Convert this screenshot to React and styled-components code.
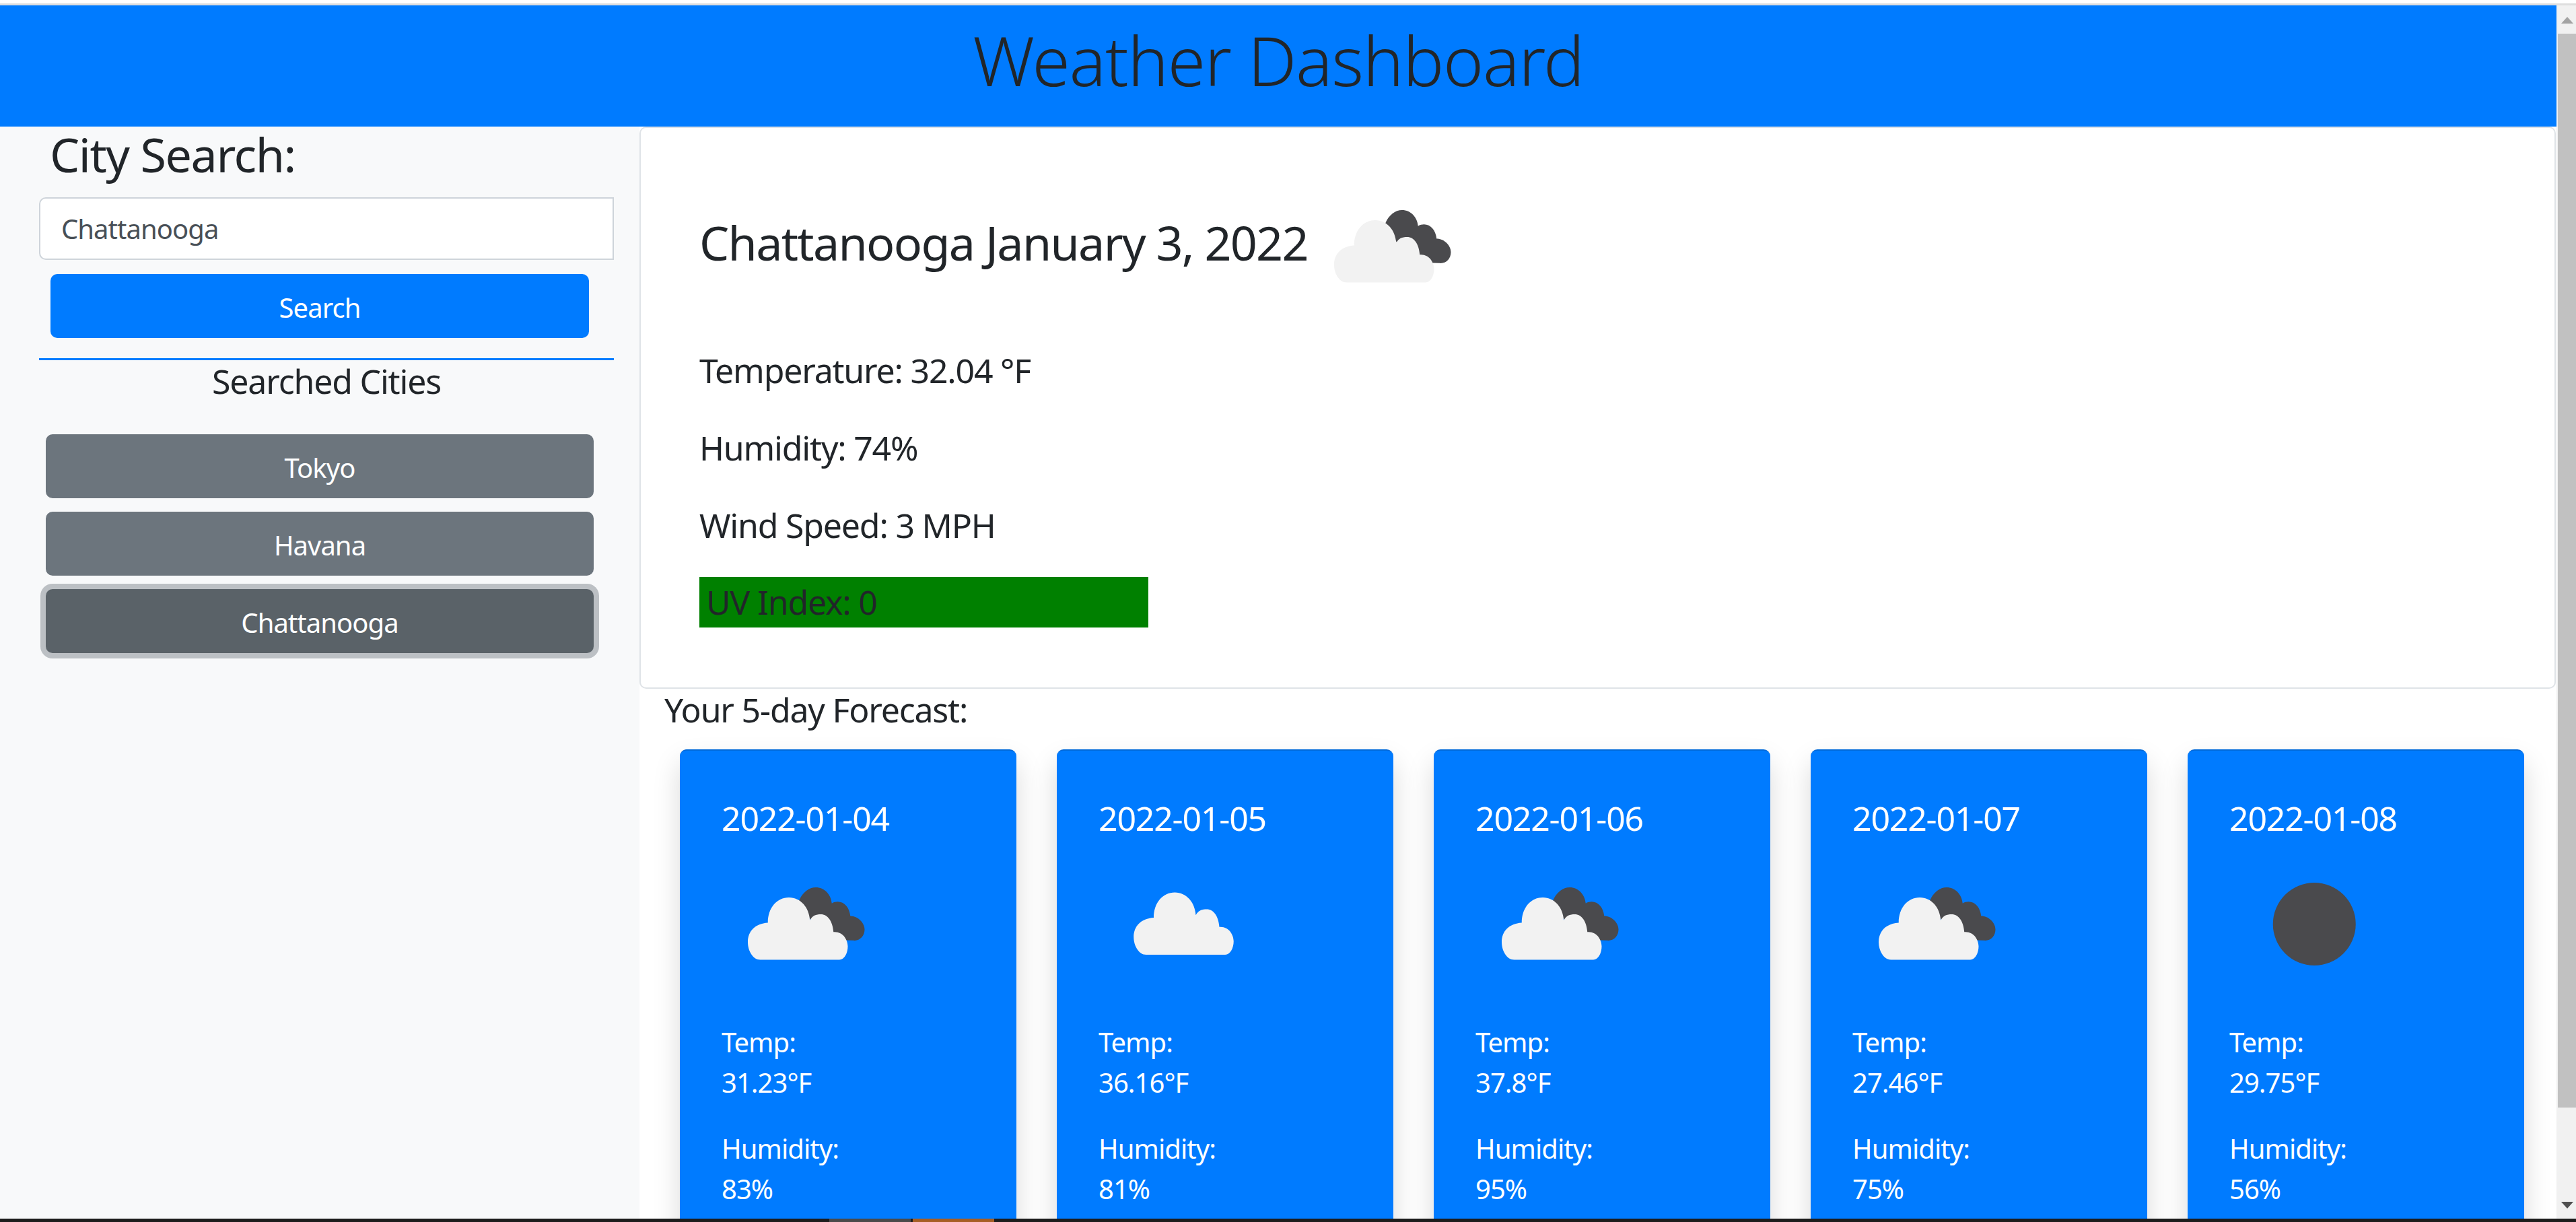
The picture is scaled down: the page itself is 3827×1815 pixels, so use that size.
import React from "react";
import styled, { createGlobalStyle } from "styled-components";

const GlobalStyle = createGlobalStyle`
  html, body, #root {
    margin: 0;
    height: 100%;
    overflow: hidden;
  }
  body {
    background: #fff;
    color: #212529;
    font-family: "Noto Sans", "Open Sans", sans-serif;
    font-weight: 400;
  }
  * {
    box-sizing: border-box;
    letter-spacing: -0.024em;
  }
`;

const Screen = styled.div`
  display: flex;
  flex-direction: column;
  height: 1815px;
  overflow: hidden;
`;

const WindowEdge = styled.div`
  flex: none;
  height: 8px;
  background: #fff;
  border-bottom: 3px solid #dedede;
`;

const Viewport = styled.div`
  flex: 1;
  min-height: 0;
  display: flex;
`;

const Page = styled.div`
  flex: 1;
  min-width: 0;
  overflow: hidden;
`;

const Scrollbar = styled.div`
  flex: none;
  width: 29px;
  background: #f1f1f1;
  display: flex;
  flex-direction: column;
  align-items: flex-end;
`;

const ScrollArrow = styled.div`
  flex: none;
  width: 27px;
  height: 42px;
  display: flex;
  align-items: ${(p) => (p.$down ? "flex-end" : "flex-start")};
  justify-content: center;
  padding: ${(p) => (p.$down ? "0 0 15px" : "17px 0 0")};
  &::after {
    content: "";
    border-left: 9px solid transparent;
    border-right: 9px solid transparent;
    border-bottom: ${(p) => (p.$down ? "0" : "10px solid #a3a3a3")};
    border-top: ${(p) => (p.$down ? "10px solid #505050" : "0")};
  }
`;

const ScrollThumb = styled.div`
  flex: none;
  width: 27px;
  height: 1595px;
  background: #c1c1c1;
`;

const ScrollGap = styled.div`
  flex: 1;
`;

const Taskbar = styled.div`
  flex: none;
  height: 5px;
  background: #1c1c1c;
  display: flex;
  padding-left: 1232px;
  gap: 3px;
`;

const TaskItem = styled.div`
  width: 121px;
  background: ${(p) => p.$color};
`;

const Header = styled.header`
  height: 180px;
  padding-bottom: 18px;
  background: #007bff;
  display: flex;
  align-items: center;
  justify-content: center;
`;

const Title = styled.h1`
  margin: 0;
  font-size: 102px;
  font-weight: 300;
  line-height: 1.2;
  letter-spacing: -0.013em;
`;

const Body = styled.div`
  display: flex;
  align-items: flex-start;
`;

const Sidebar = styled.aside`
  flex: none;
  width: 950px;
  min-height: 1622px;
  background: #f8f9fa;
  padding: 0 38px 0 58px;
`;

const SidebarTitle = styled.h3`
  margin: 0 0 0 16px;
  font-size: 70px;
  font-weight: 400;
  line-height: 82px;
  height: 105px;
  letter-spacing: -0.02em;
`;

const CityInput = styled.input`
  display: block;
  width: 854px;
  height: 93px;
  padding: 0 31px;
  border: 2.5px solid #ced4da;
  border-right-width: 2px;
  border-radius: 10px 0 0 10px;
  background: #fff;
  color: #495057;
  font-family: inherit;
  font-size: 40px;
`;

const SearchButton = styled.button`
  display: block;
  width: 800px;
  height: 95px;
  margin: 21px 0 0 17px;
  padding: 3px 0 0;
  border: 0;
  border-radius: 10px;
  background: #007bff;
  color: #fff;
  font-family: inherit;
  font-size: 40px;
`;

const Divider = styled.hr`
  width: 854px;
  margin: 30px 0 0;
  border: 0;
  border-top: 3px solid #007bff;
`;

const SearchedTitle = styled.div`
  width: 854px;
  height: 110px;
  font-size: 50px;
  line-height: 62px;
  text-align: center;
`;

const CityList = styled.div`
  display: flex;
  flex-direction: column;
  gap: 20px;
  width: 814px;
  margin-left: 10px;
`;

const CityButton = styled.button`
  display: block;
  width: 100%;
  height: 95px;
  padding: 3px 0 0;
  border: 0;
  border-radius: 10px;
  background: ${(p) => (p.$active ? "#5a6268" : "#6c757d")};
  color: #fff;
  font-family: inherit;
  font-size: 40px;
  box-shadow: ${(p) => (p.$active ? "0 0 0 8px #bcc0c4" : "none")};
`;

const Main = styled.main`
  flex: 1;
  min-width: 0;
  background: #fff;
`;

const CurrentCard = styled.section`
  height: 835px;
  margin-right: 1px;
  padding: 52px 0 0 87px;
  background: #fff;
  border: 2.5px solid #dfe3e7;
  border-radius: 10px;
`;

const CurrentHead = styled.div`
  display: flex;
  align-items: center;
  height: 250px;
`;

const CurrentCity = styled.h2`
  margin: 0 0 14px;
  font-size: 70px;
  font-weight: 400;
  line-height: 1.2;
`;

const WeatherIcon = styled.svg`
  flex: none;
  display: block;
  width: 250px;
  height: 250px;
`;

const Stat = styled.p`
  margin: 0 0 55px;
  font-size: 50px;
  line-height: 60px;
  &:first-of-type {
    margin-top: 28px;
  }
`;

const UvBar = styled.div`
  width: 667px;
  height: 75px;
  margin-top: -8px;
  padding-left: 10px;
  background: #008000;
  font-size: 50px;
  line-height: 75px;
`;

const ForecastLabel = styled.div`
  margin-left: 37px;
  height: 90px;
  font-size: 50px;
  line-height: 62px;
`;

const ForecastRow = styled.div`
  display: flex;
  gap: 60px;
  padding-left: 60px;
`;

const ForecastCard = styled.article`
  flex: none;
  width: 500px;
  height: 800px;
  padding: 60px 0 0 62px;
  background: #007bff;
  border-top: 2.5px solid #0069d9;
  border-radius: 10px;
  color: #fff;
  box-shadow: 0 20px 40px rgba(0, 0, 0, 0.15);
`;

const ForecastDate = styled.h5`
  margin: 0;
  font-size: 50px;
  font-weight: 400;
  line-height: 80px;
  height: 73px;
`;

const ForecastText = styled.p`
  margin: 0 0 38px;
  font-size: 40px;
  line-height: 60px;
  &:first-of-type {
    margin-top: 20px;
  }
`;

const days = [
  { date: "2022-01-04", icon: "broken", temp: "31.23", humidity: "83" },
  { date: "2022-01-05", icon: "cloud", temp: "36.16", humidity: "81" },
  { date: "2022-01-06", icon: "broken", temp: "37.8", humidity: "95" },
  { date: "2022-01-07", icon: "broken", temp: "27.46", humidity: "75" },
  { date: "2022-01-08", icon: "clear", temp: "29.75", humidity: "56" },
];

const LIGHT_CLOUD =
  "M23 71C18.5 71 15.6 65.500 15.6 60.500C15.6 54 20 49.500 27.500 49C27.500 40 33 34 40 34C47 34 52 40 52.500 47.500C54 44.800 56 44 59 44C63 44 66 48 66.500 54.500C72 54 75 59 75 63C75 67 73 71 70 71Z";
const DARK_CLOUD =
  "M46 36C48 31 52 28 56 28C61 28 65 32 65.500 37.500C66.500 36.800 68 36.500 69 36.500C73 36.500 76 40 76.500 45C81 45 85 49 85 53C85 57 82 60 78 59.500L60 59Z";

const Icon = ({ kind }) => (
  <WeatherIcon viewBox="0 0 100 100">
    {kind === "clear" && <circle cx="50.500" cy="49.800" r="24.600" fill="#4a4a4d" />}
    {kind === "broken" && (
      <>
        <path d={DARK_CLOUD} fill="#4a4a4d" />
        <path d={LIGHT_CLOUD} fill="#f2f2f2" />
      </>
    )}
    {kind === "cloud" && (
      <path d={LIGHT_CLOUD} fill="#f2f2f2" transform="translate(5.300 -3)" />
    )}
  </WeatherIcon>
);

const App = () => {
  return (
    <React.Fragment>
      <GlobalStyle />
      <Screen>
        <WindowEdge />
        <Viewport>
          <Page>
            <Header>
              <Title>Weather Dashboard</Title>
            </Header>
            <Body>
              <Sidebar>
                <SidebarTitle>City Search:</SidebarTitle>
                <CityInput defaultValue="Chattanooga" />
                <SearchButton>Search</SearchButton>
                <Divider />
                <SearchedTitle>Searched Cities</SearchedTitle>
                <CityList>
                  <CityButton>Tokyo</CityButton>
                  <CityButton>Havana</CityButton>
                  <CityButton $active>Chattanooga</CityButton>
                </CityList>
              </Sidebar>
              <Main>
                <CurrentCard>
                  <CurrentHead>
                    <CurrentCity>Chattanooga January 3, 2022</CurrentCity>
                    <Icon kind="broken" />
                  </CurrentHead>
                  <Stat>Temperature: 32.04 °F</Stat>
                  <Stat>Humidity: 74%</Stat>
                  <Stat>Wind Speed: 3 MPH</Stat>
                  <UvBar>UV Index: 0</UvBar>
                </CurrentCard>
                <ForecastLabel>Your 5-day Forecast:</ForecastLabel>
                <ForecastRow>
                  {days.map((day) => (
                    <ForecastCard key={day.date}>
                      <ForecastDate>{day.date}</ForecastDate>
                      <Icon kind={day.icon} />
                      <ForecastText>
                        Temp:
                        <br />
                        {day.temp}°F
                      </ForecastText>
                      <ForecastText>
                        Humidity:
                        <br />
                        {day.humidity}%
                      </ForecastText>
                    </ForecastCard>
                  ))}
                </ForecastRow>
              </Main>
            </Body>
          </Page>
          <Scrollbar>
            <ScrollArrow />
            <ScrollThumb />
            <ScrollGap />
            <ScrollArrow $down />
          </Scrollbar>
        </Viewport>
        <Taskbar>
          <TaskItem $color="#4a4a4a" />
          <TaskItem $color="#a65e24" />
        </Taskbar>
      </Screen>
    </React.Fragment>
  );
};

export default App;
